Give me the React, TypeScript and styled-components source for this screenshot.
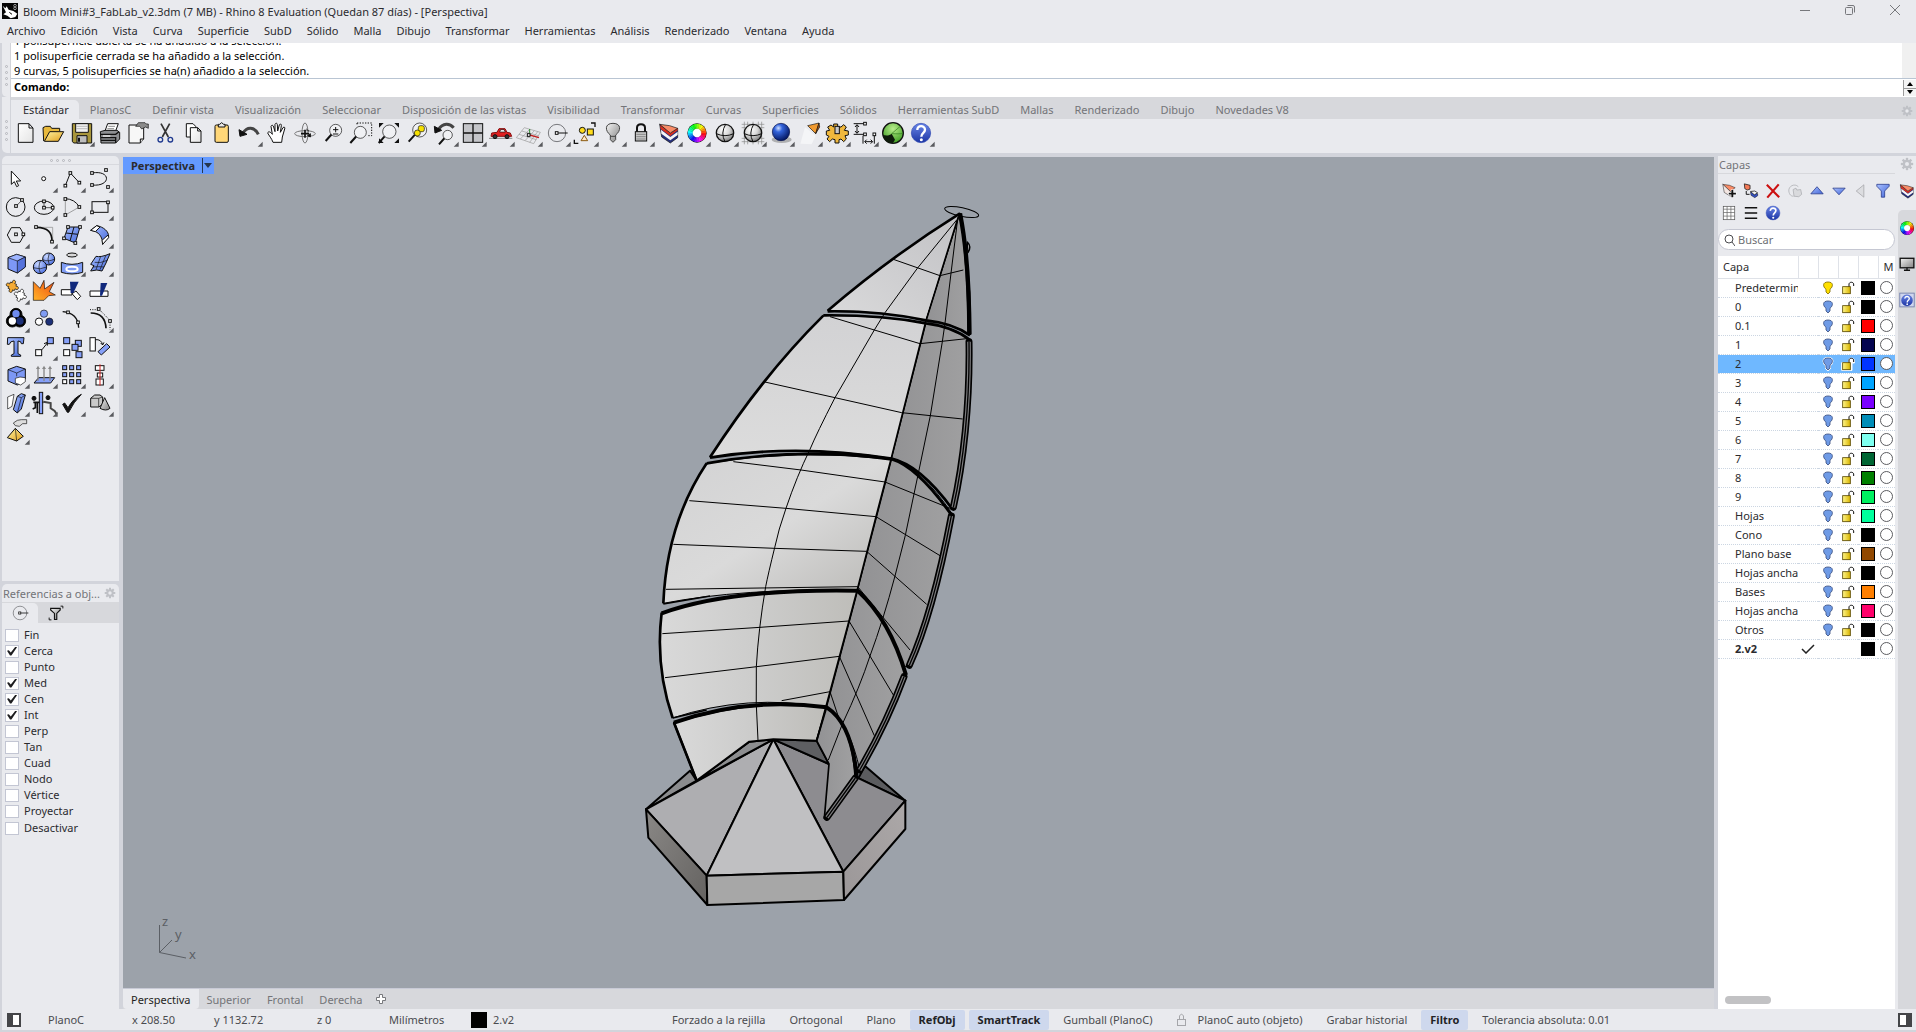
import React, { ReactNode } from 'react';
import styled, { createGlobalStyle } from 'styled-components';

const Global = createGlobalStyle`
  *, *::before, *::after { box-sizing: border-box; }
  html, body { margin: 0; padding: 0; }
  body, button, input, table {
    font-family: "Noto Sans", "Open Sans", sans-serif;
    font-size: 11px;
    color: #2b2b2e;
  }
  button { border: 0; padding: 0; background: none; cursor: default; }
  svg { flex: none; }
`;

const C = {
  panel: '#e9eaee',
  strip: '#d7d8dc',
  gap: '#d2d4db',
  view: '#9ca2aa',
  muted: '#737478',
};

/* ---------- layout ---------- */

const App_ = styled.div`
  display: flex;
  flex-direction: column;
  height: 100vh;
  overflow: hidden;
  background: ${C.gap};
  white-space: nowrap;
`;

const TitleBar = styled.header`
  display: flex;
  align-items: center;
  gap: 5px;
  height: 22px;
  padding: 0 14px 0 2px;
  background: ${C.panel};
`;

const Title = styled.h1`
  margin: 0;
  flex: 1;
  font-size: 11px;
  font-weight: 400;
`;

const WindowButtons = styled.div`
  display: flex;
  gap: 31px;
`;

const WindowButton = styled.button`
  display: flex;
  width: 14px;
  height: 14px;
`;

const MenuBar = styled.nav`
  display: flex;
  align-items: center;
  gap: 15px;
  height: 21px;
  padding: 0 7px 4px;
  background: ${C.panel};
`;

const MenuItem = styled.button`
  line-height: 16px;
`;

const CommandArea = styled.section`
  display: flex;
  height: 54px;
  padding-left: 2px;
`;

const Handle = styled.div`
  display: flex;
  flex-direction: column;
  align-items: center;
  justify-content: center;
  gap: 3px;
  width: 9px;
  padding-top: 10px;
  background: ${C.panel};
  border-right: 1px solid #d2d4da;
  border-radius: 0 0 0 5px;
`;

const Dot = styled.i`
  width: 3px;
  height: 3px;
  border: 1px solid #b4b6bb;
  border-radius: 50%;
`;

const CommandBody = styled.div`
  display: flex;
  flex-direction: column;
  flex: 1;
  background: #fff;
`;

const History = styled.div`
  display: flex;
  flex-direction: column;
  justify-content: flex-end;
  height: 36px;
  overflow: hidden;
  border-bottom: 1px solid #b9c5d3;
  background: linear-gradient(to left, #f0f0f0 14px, #fff 14px);
  color: #000;
`;

const HistoryLine = styled.p`
  margin: 0;
  padding-left: 3px;
  line-height: 15px;
  flex: none;
`;

const Prompt = styled.div`
  display: flex;
  align-items: center;
  flex: 1;
  padding-left: 3px;
  label {
    font-weight: 700;
    line-height: 14px;
    padding-bottom: 2px;
    color: #000;
  }
`;

const PromptInput = styled.input`
  flex: 1;
  height: 16px;
  border: 0;
  outline: 0;
  background: transparent;
`;

const Spinner = styled.div`
  display: flex;
  flex-direction: column;
  gap: 1px;
  width: 13px;
  height: 16px;
  background: #9b9b9b;
  padding-left: 1px;
`;

const SpinButton = styled.button`
  display: flex;
  flex: 1;
  align-items: center;
  justify-content: center;
  background: #f4f4f4;
`;

const ToolArea = styled.section`
  display: flex;
  height: 56px;
  padding: 0 0 0 2px;
`;

const ToolBody = styled.div`
  flex: 1;
  background: ${C.panel};
`;

const ToolTabs = styled.div`
  display: flex;
  align-items: flex-end;
  gap: 1px;
  height: 22px;
  padding-right: 1px;
  background: ${C.strip};
`;

const ToolTab = styled.button<{ $on?: boolean }>`
  height: 19px;
  padding: 0 10px;
  padding-left: ${p => (p.$on ? 12 : 10)}px;
  line-height: 18px;
  color: ${p => (p.$on ? '#2b2b2e' : C.muted)};
  background: ${p => (p.$on ? C.panel : 'transparent')};
  border-radius: 0 5px 0 0;
`;

const Spacer = styled.div`
  flex: 1;
`;

const ToolRow = styled.div`
  display: flex;
  height: 34px;
`;

const Cell = styled.button`
  display: flex;
  width: 28px;
  height: 28px;
`;

const Main = styled.main`
  display: flex;
  flex: 1;
  min-height: 0;
  padding-top: 3px;
`;

const Left = styled.aside`
  display: flex;
  flex-direction: column;
  gap: 3px;
  width: 121px;
  padding: 0 2px;
`;

const Tools = styled.section`
  height: 425px;
  background: ${C.panel};
  border-radius: 5px 5px 0 0;
`;

const Grip = styled.div`
  display: flex;
  justify-content: center;
  gap: 3px;
  height: 9px;
  padding-top: 3px;
  border-bottom: 1px solid #d8d9de;
`;

const ToolGrid = styled.div`
  display: grid;
  grid-template-columns: repeat(4, 28px);
`;

const Osnaps = styled.section`
  flex: 1;
  background: ${C.panel};
  border-radius: 5px 5px 0 0;
`;

const PanelTitle = styled.h2<{ $h: number }>`
  display: flex;
  align-items: center;
  justify-content: space-between;
  height: ${p => p.$h}px;
  margin: 0;
  padding: 0 3px 0 1px;
  font-size: 11px;
  font-weight: 400;
  color: ${C.muted};
  border-bottom: 1px solid ${C.strip};
`;

const OsnapTabs = styled.div`
  display: flex;
  height: 20px;
  background: ${C.strip};
`;

const OsnapTab = styled.button<{ $on?: boolean }>`
  display: flex;
  align-items: center;
  justify-content: center;
  width: 36px;
  background: ${p => (p.$on ? C.panel : 'transparent')};
  border-radius: 0 5px 0 0;
`;

const Checks = styled.div`
  display: flex;
  flex-direction: column;
  padding: 4px 3px;
`;

const Check = styled.label`
  display: flex;
  align-items: center;
  gap: 5px;
  height: 16px;
  line-height: 16px;
  &:last-child { height: 18px; }
`;

const Box = styled.input`
  appearance: none;
  display: flex;
  width: 14px;
  height: 13px;
  margin: 0;
  background: #fff;
  border: 1px solid #c3c6d3;
  &:checked::after {
    content: "";
    width: 10px;
    height: 9px;
    margin: 1px;
    background: #1e1e20;
    clip-path: polygon(0 48%, 18% 42%, 38% 68%, 85% 0, 100% 8%, 44% 100%, 30% 100%);
  }
`;

const Center = styled.section`
  display: flex;
  flex-direction: column;
  flex: 1;
  min-width: 0;
  padding: 1px 0 0 2px;
`;

const Viewport = styled.div`
  position: relative;
  flex: 1;
  min-height: 0;
  background: ${C.view};
`;

const Scene = styled.svg`
  position: absolute;
  inset: 0;
  width: 100%;
  height: 100%;
`;

const ViewLabel = styled.button`
  position: absolute;
  top: 0;
  left: 0;
  display: flex;
  align-items: center;
  gap: 7px;
  height: 17px;
  padding: 0 2px 0 8px;
  font-weight: 700;
  background: #649aff;
`;

const ViewArrow = styled.span`
  display: flex;
  align-items: center;
  height: 15px;
  padding-left: 1px;
  border-left: 1px solid #26374f;
`;

const Axes = styled.svg`
  position: absolute;
  left: 32px;
  bottom: 18px;
  width: 50px;
  height: 60px;
  font-size: 13px;
`;

const ViewTabs = styled.div`
  display: flex;
  align-items: center;
  height: 21px;
  background: ${C.strip};
  border-top: 1px solid #c8cad6;
`;

const ViewTab = styled.button<{ $on?: boolean }>`
  height: 20px;
  padding: 0 8px;
  color: ${p => (p.$on ? '#1f1f22' : C.muted)};
  background: ${p => (p.$on ? C.panel : 'transparent')};
  border-radius: 0 0 4px 4px;
`;

const AddTab = styled.button`
  display: flex;
  padding: 0 6px;
`;

const Right = styled.aside`
  display: flex;
  width: 202px;
  padding-left: 4px;
`;

const Layers = styled.section`
  display: flex;
  flex-direction: column;
  width: 180px;
  background: ${C.panel};
  padding-right: 3px;
`;

const LayerTools = styled.div`
  display: grid;
  grid-template-columns: repeat(8, 22px);
  grid-auto-rows: 22px;
  height: 55px;
  padding-top: 6px;
`;

const SmallCell = styled.button`
  display: flex;
  align-items: center;
  justify-content: center;
`;

const Search = styled.label`
  display: flex;
  align-items: center;
  gap: 3px;
  height: 21px;
  margin-bottom: 6px;
  padding: 0 5px;
  background: #fff;
  border: 1px solid #c5c7d2;
  border-radius: 11px;
`;

const SearchInput = styled.input`
  flex: 1;
  min-width: 0;
  padding: 0;
  border: 0;
  outline: 0;
  background: transparent;
  &::placeholder { color: #6e6f73; opacity: 1; }
`;

const LayerList = styled.div`
  display: flex;
  flex-direction: column;
  justify-content: space-between;
  flex: 1;
  background: #fff;
`;

const Table = styled.table`
  width: 100%;
  table-layout: fixed;
  border-collapse: collapse;
  th {
    height: 22px;
    padding: 0 0 0 5px;
    font-weight: 400;
    text-align: left;
    border-right: 1px solid #dfe2e8;
    border-bottom: 1px solid #dfe2e8;
    overflow: hidden;
  }
  th:last-child { border-right: 0; }
  td { padding: 0; overflow: hidden; }
`;

const Row = styled.tr<{ $on?: boolean; $bold?: boolean }>`
  height: 19px;
  background: ${p => (p.$on ? '#6fb8ff' : 'transparent')};
  font-weight: ${p => (p.$bold ? 700 : 400)};
  border-bottom: 1px dotted #ccd6e2;
`;

const Name = styled.div`
  padding-left: 17px;
  overflow: hidden;
  line-height: 18px;
`;

const Mid = styled.div`
  display: flex;
  align-items: center;
  justify-content: center;
  height: 18px;
`;

const Swatch = styled.button<{ $c: string }>`
  width: 14px;
  height: 14px;
  background: ${p => p.$c};
  border: 1px solid #000;
`;

const Ring = styled.button`
  flex: none;
  width: 13px;
  height: 13px;
  background: #fff;
  border: 1px solid #5c5d61;
  border-radius: 50%;
`;

const ScrollTrack = styled.div`
  padding: 5px 7px;
`;

const Thumb = styled.div`
  width: 46px;
  height: 8px;
  background: #c2c2c4;
  border-radius: 4px;
`;

const Side = styled.nav`
  display: flex;
  flex-direction: column;
  width: 18px;
  background: ${C.panel};
`;

const SideHead = styled.div`
  display: flex;
  flex-direction: column;
  align-items: center;
  gap: 10px;
  height: 54px;
  padding-top: 1px;
  overflow: hidden;
`;

const SideTabs = styled.div`
  display: flex;
  flex-direction: column;
  align-items: center;
  gap: 20px;
  flex: 1;
  padding-top: 10px;
  background: ${C.strip};
  border-radius: 5px 0 0 0;
`;

const Status = styled.footer`
  display: flex;
  align-items: center;
  height: 23px;
  margin: 0 0 0 2px;
  padding: 0 4px 0 5px;
  background: ${C.panel};
  border-bottom: 2px solid ${C.gap};
`;

const Field = styled.button<{ $w: number }>`
  display: flex;
  align-items: center;
  gap: 6px;
  width: ${p => p.$w}px;
  text-align: left;
  color: #4a4b4f;
`;

const Toggles = styled.div`
  display: flex;
  gap: 4px;
`;

const Toggle = styled.button<{ $on?: boolean }>`
  display: flex;
  align-items: center;
  gap: 10px;
  height: 20px;
  padding: 0 ${p => (p.$on ? 9 : 10)}px;
  color: ${p => (p.$on ? '#222326' : '#4a4b4f')};
  font-weight: ${p => (p.$on ? 700 : 400)};
  background: ${p => (p.$on ? '#ced8ed' : 'transparent')};
  border-radius: 2px;
`;

/* ---------- icon drawings, on an 84 unit cell ---------- */

const K = '#111';

const Defs = () => (
  <svg width="0" height="0" style={{ position: 'absolute' }} aria-hidden="true">
    <defs>
      <linearGradient id="paper" x1="0" y1="0" x2="1" y2="1"><stop offset="0" stopColor="#fff" /><stop offset="1" stopColor="#e4e4e4" /></linearGradient>
      <linearGradient id="gold" x1="0" y1="0" x2="1" y2="1"><stop offset="0" stopColor="#fff3a0" /><stop offset="1" stopColor="#e0a020" /></linearGradient>
      <linearGradient id="blue" x1="0" y1="0" x2="1" y2="1"><stop offset="0" stopColor="#a9c0ff" /><stop offset="1" stopColor="#4266d8" /></linearGradient>
      <linearGradient id="fire" x1="1" y1="0" x2="0" y2="1"><stop offset="0" stopColor="#f04a10" /><stop offset="1" stopColor="#ffb428" /></linearGradient>
      <linearGradient id="help" x1="0" y1="0" x2="0" y2="1"><stop offset="0" stopColor="#6a86e8" /><stop offset="1" stopColor="#1c35a4" /></linearGradient>
      <linearGradient id="grey" x1="0" y1="0" x2="1" y2="1"><stop offset="0" stopColor="#f4f4f4" /><stop offset="1" stopColor="#808080" /></linearGradient>
      <linearGradient id="yel" x1="0" y1="0" x2="1" y2="0"><stop offset="0" stopColor="#fff68a" /><stop offset="1" stopColor="#d9b400" /></linearGradient>
      <radialGradient id="ball" cx=".38" cy=".3" r=".75"><stop offset="0" stopColor="#fff" /><stop offset=".5" stopColor="#d8d8d8" /><stop offset="1" stopColor="#777" /></radialGradient>
      <radialGradient id="bball" cx=".35" cy=".28" r=".75"><stop offset="0" stopColor="#cfe0ff" /><stop offset=".3" stopColor="#3464dc" /><stop offset="1" stopColor="#03155e" /></radialGradient>
      <radialGradient id="sky" cx=".35" cy=".3" r=".75"><stop offset="0" stopColor="#c9d8ff" /><stop offset="1" stopColor="#4c6fe0" /></radialGradient>
      <radialGradient id="green" cx=".5" cy=".3" r=".7"><stop offset="0" stopColor="#b8ec8c" /><stop offset="1" stopColor="#3c9c20" /></radialGradient>
      <linearGradient id="leafA" x1="0" y1="0" x2="1" y2="1"><stop offset="0" stopColor="#d2d2d3" /><stop offset=".5" stopColor="#dadada" /><stop offset="1" stopColor="#b7b6b3" /></linearGradient>
      <linearGradient id="leafTop" x1="1" y1="0" x2="0" y2="1"><stop offset="0" stopColor="#c2c2c5" /><stop offset="1" stopColor="#dadadb" /></linearGradient>
      <linearGradient id="leafMid" x1="0" y1="0" x2="0" y2="1"><stop offset="0" stopColor="#d2d2d4" /><stop offset="1" stopColor="#dcdcdc" /></linearGradient>
      <linearGradient id="leafB" x1="0" y1="0" x2="1" y2="0"><stop offset="0" stopColor="#d9d9d9" /><stop offset=".5" stopColor="#cccccb" /><stop offset="1" stopColor="#bebdb9" /></linearGradient>
      <linearGradient id="dark" x1="0" y1="0" x2="1" y2="0"><stop offset="0" stopColor="#929294" /><stop offset="1" stopColor="#a0a0a1" /></linearGradient>
      <linearGradient id="baseL" x1="0" y1="0" x2="1" y2="1"><stop offset="0" stopColor="#8a8886" /><stop offset="1" stopColor="#646260" /></linearGradient>
      <linearGradient id="baseR" x1="0" y1="1" x2="1" y2="0"><stop offset="0" stopColor="#9b9798" /><stop offset="1" stopColor="#aca8a8" /></linearGradient>
    </defs>
  </svg>
);

const Draw = ({ s = 28, tri, children }: { s?: number; tri?: boolean; children?: ReactNode }) => (
  <svg width={s} height={s} viewBox="0 0 84 84" fill="none" stroke={K} strokeWidth="3" aria-hidden="true">
    {children}
    {tri && <path d="M83 68V83H68Z" fill="#5a5b5f" stroke="none" />}
  </svg>
);

const P = ({ pts }: { pts: number[][] }) => (
  <g fill="#fff" strokeWidth="3">
    {pts.map(([x, y], i) => <rect key={i} x={x - 4} y={y - 4} width="8" height="8" />)}
  </g>
);

const Wheel = () => (
  <g strokeWidth="15">
    <circle cx="42" cy="42" r="29" stroke="none" fill={K} />
    {Array.from({ length: 24 }, (_, i) => {
      const a = ((i * 15 - 1) * Math.PI) / 180;
      const b = ((i * 15 + 16) * Math.PI) / 180;
      const d = `M${42 + 20 * Math.cos(a)} ${42 + 20 * Math.sin(a)}A20 20 0 0 1 ${42 + 20 * Math.cos(b)} ${42 + 20 * Math.sin(b)}`;
      return <path key={i} d={d} stroke={`hsl(${(360 - i * 15) % 360} 95% 52%)`} />;
    })}
    <circle cx="42" cy="42" r="13" stroke="none" fill="#fff" />
  </g>
);

const Help = () => (
  <>
    <circle cx="42" cy="42" r="29" fill="url(#help)" stroke="#2c46b0" strokeWidth="2" />
    <path d="M31 33C30 18 54 18 54 32C54 42 43 41 43 53" stroke="#fff" strokeWidth="7" />
    <circle cx="43" cy="62" r="4.500" fill="#fff" stroke="none" />
  </>
);

const LayerStack = () => (
  <>
    <path d="M14 16L20 54L46 72L68 56V28L46 44Z" fill="#26307c" strokeWidth="2" />
    <path d="M18 32L46 54L68 38V48L46 64L19 44Z" fill="#f6f6f6" stroke="none" />
    <path d="M15 18L46 43L68 28V34L46 51L17 30Z" fill="#d8301e" stroke="none" />
    <path d="M14 16L44 20L68 28L46 42Z" fill="#f88c68" strokeWidth="2" />
  </>
);

const Lens = ({ x = 48, y = 34, r = 18 }: { x?: number; y?: number; r?: number }) => (
  <>
    <path d={`M${x - r * 0.7} ${y + r * 0.7}L${x - r - 12} ${y + r + 14}`} strokeWidth="6" />
    <circle cx={x} cy={y} r={r} fill="#fff" fillOpacity=".35" strokeWidth="2" />
  </>
);

const Bulb = () => (
  <path d="M42 13C16 13 18 36 34 48V62L42 70L50 62V48C66 36 68 13 42 13ZM34 52H50" fill="url(#grey)" stroke="#444" />
);

const Gear = () => (
  <g stroke="#bfc1c6">
    {[0, 45, 90, 135].map(a => <path key={a} d="M42 5V79" strokeWidth="14" transform={`rotate(${a} 42 42)`} />)}
    <circle cx="42" cy="42" r="19" fill={C.panel} strokeWidth="14" />
  </g>
);

const Puzzle = ({ fill }: { fill: string }) => (
  <path d="M-10 -10H-4C-9 -22 9 -22 4 -10H10V-4C22 -9 22 9 10 4V10H4C9 22 -9 22 -4 10H-10V4C-22 9 -22 -9 -10 -4Z" fill={fill} strokeWidth="2" />
);

const gearPath = 'M30 13H42V22H52L60 15L68 22L62 32L74 34V46L64 48L68 58L60 66L52 58L46 60V70H34V60L26 58L18 66L10 58L16 50L8 46V34L18 32L12 22L22 16L30 22Z';

const T = {
  new: <path d="M22 14H54L66 27V70H22ZM54 14V27H66" fill="url(#paper)" />,
  open: <><path d="M14 66L12 26L20 22H34L38 28H62V36" fill="#e8b93c" /><path d="M16 67L32 38H74L58 67Z" fill="url(#gold)" /></>,
  save: <><path d="M16 14H74V72H20L16 67Z" fill="#a8963c" /><path d="M26 14H64V40H26Z" fill="#f2f2f2" /><path d="M28 22H62M28 29H62" stroke="#a0a0a0" strokeWidth="2" /><path d="M30 50H60V72H30Z" fill="#bdbdbd" /><path d="M36 56V68" strokeWidth="6" /></>,
  print: <><path d="M30 36L38 14H70L62 36Z" fill="#fff" /><path d="M40 22H60M37 29H57" strokeWidth="2" stroke="#555" /><path d="M16 38L30 34H66L74 40V60L62 72H18Z" fill="#8d8f92" /><path d="M18 46H62L72 38M18 56H62V72M18 64H62" strokeWidth="4" /><path d="M24 51H46" stroke="#eee" strokeWidth="4" /></>,
  props: <><path d="M18 18H62V60L52 72H18Z" fill="#f7f7f7" /><path d="M62 60H52V72" fill="#ddd" /><path d="M38 22L46 11H66L70 15H76V28L68 24L56 30L50 22Z" fill="#8b8b8b" strokeWidth="2" /></>,
  cut: <><path d="M30 14L52 54M56 14L34 54" stroke="#333" strokeWidth="5" /><circle cx="28" cy="62" r="7" stroke="#203a90" strokeWidth="4" /><circle cx="58" cy="62" r="7" stroke="#203a90" strokeWidth="4" /></>,
  copy: <><path d="M22 14H42L50 22V54H22Z" fill="#fff" /><path d="M34 26H56L66 36V70H34ZM56 26V36H66" fill="url(#paper)" /></>,
  paste: <><rect x="24" y="18" width="40" height="52" rx="4" fill="#ffd778" /><path d="M34 24V16H38L44 11L50 16H54V24Z" fill="#e8e8e8" /></>,
  undo: <><path d="M24 42C36 22 58 22 70 46" strokeWidth="9" stroke="#444" /><path d="M12 32L15 52L36 46Z" fill={K} /></>,
  hand: <path d="M30 70C26 58 18 50 14 42C16 36 22 38 28 46L24 22C26 17 30 18 32 24L36 38V16C38 11 43 12 43 17L44 36L49 18C51 13 56 15 55 20L52 40L60 26C64 22 67 26 65 30L58 54L56 70Z" fill="#fff" />,
  orbit: <><ellipse cx="42" cy="44" rx="31" ry="9" stroke="#777" /><ellipse cx="42" cy="42" rx="9" ry="30" stroke="#777" /><path d="M30 44H54M42 32V56" strokeWidth="5" /><path d="M46 30L54 37M50 50L58 44L58 54Z" fill={K} /></>,
  zoom: <><Lens x={50} y={34} r={18} /><path d="M42 32H58M50 24V40M42 45H58" strokeWidth="3" /></>,
  zoomWin: <><path d="M30 12H74V50H64M30 12V20" strokeDasharray="4 4" /><Lens x={40} y={40} r={18} /></>,
  zoomExt: <><Lens x={43} y={38} r={20} /><path d="M12 12H26L12 26ZM72 12H58L72 26ZM72 72H58L72 58ZM12 72H26L12 58Z" fill={K} stroke="none" /></>,
  zoomSel: <><Lens x={50} y={33} r={21} /><rect x="46" y="20" width="18" height="18" rx="6" fill="#f6e100" strokeWidth="2" /><circle cx="43" cy="42" r="9" fill="#f6e100" strokeWidth="2" /></>,
  undoView: <><path d="M22 32C36 10 56 12 68 26" strokeWidth="9" stroke="#444" /><path d="M10 22L12 42L32 34Z" fill={K} /><Lens x={50} y={48} r={14} /></>,
  views: <><rect x="13" y="14" width="58" height="56" fill="#c4c5c9" /><path d="M42 14V70M13 42H71" strokeWidth="4" /></>,
  car: <><path d="M6 58H76" stroke="#888" /><path d="M14 42L30 40L36 29H54L60 40L70 42L74 52H12Z" fill="#e02020" stroke="#8a1010" /><path d="M38 39L41 32H51L55 39Z" fill="#fff" strokeWidth="2" /><circle cx="24" cy="53" r="6" fill="#333" /><circle cx="60" cy="53" r="6" fill="#333" /></>,
  cplane: <><path d="M4 56L28 26L76 40L56 74ZM12 46L64 62M20 36L70 50M16 60L44 31M30 65L58 35M44 70L68 38" stroke="#999" strokeWidth="2" /><path d="M44 48L72 56" stroke="#c02020" strokeWidth="4" /><path d="M44 48V30" stroke="#2a8a2a" /><P pts={[[41, 48]]} /></>,
  osnap: <><circle cx="42" cy="42" r="26" stroke="#77787c" /><path d="M44 42H74" /><P pts={[[41, 42]]} /></>,
  select: <><path d="M60 12H72V24M10 62V73H22" strokeWidth="4" /><circle cx="34" cy="34" r="9" fill="#ffdc1c" /><rect x="49" y="30" width="18" height="18" fill="#ffdc1c" /><path d="M40 49L50 65H30Z" fill="#ffe9c8" stroke="#8a5a10" /></>,
  bulb: <Bulb />,
  lock: <><path d="M30 40V26C30 12 54 12 54 26V40" strokeWidth="6" /><rect x="25" y="38" width="34" height="28" fill="#c8c8c8" /><path d="M28 46H56M28 53H56M28 60H56" stroke="#888" /></>,
  layers: <LayerStack />,
  color: <Wheel />,
  sphere: <><circle cx="42" cy="42" r="26" fill="url(#ball)" strokeWidth="4" /><path d="M16 44Q42 56 68 44M44 16Q28 42 42 68" /></>,
  sphereGrid: <><path d="M8 16H76M8 26H76M8 58H76M8 68H76M16 8V76M26 8V76M42 8V76M58 8V76M68 8V76" stroke="#888" strokeWidth="2" /><circle cx="42" cy="42" r="26" fill="url(#ball)" strokeWidth="4" /><path d="M16 44Q42 56 68 44M44 16Q28 42 42 68" /></>,
  render: <><ellipse cx="44" cy="62" rx="30" ry="10" fill="#888" stroke="none" opacity=".6" /><circle cx="42" cy="39" r="26" fill="url(#bball)" stroke="#06104a" strokeWidth="2" /></>,
  spot: <><path d="M16 74L30 24L62 50L50 76Z" fill="#fff" stroke="none" opacity=".5" /><path d="M38 20L72 12L62 44Z" fill="#f09a30" strokeWidth="2" /><path d="M72 12L74 24L62 44Z" fill="#b05a10" strokeWidth="2" /></>,
  gear: <><path d={gearPath} fill="#f0b83c" transform="translate(2 2)" /><rect x="36" y="22" width="13" height="22" fill="#c9c9c9" /></>,
  dims: <><path d="M8 14H40M8 46H40M18 18V42M12 24L18 17L24 24M12 36L18 43L24 36M36 50V74M70 50V74M42 68H64M47 62L41 68L47 74M59 62L65 68L59 74" /><P pts={[[42, 14], [42, 46], [70, 46]]} /></>,
  earth: <><circle cx="42" cy="42" r="31" fill="url(#green)" strokeWidth="4" /><path d="M12 48C22 50 32 50 38 44L48 62L42 72C26 74 14 64 12 48Z" fill="#0d1a0a" stroke="none" /><path d="M38 44L66 20M38 44C54 44 62 46 72 42" stroke="#2f7a1c" strokeWidth="2" /></>,
  help: <Help />,
};

const cubeShape = 'M18 26L44 16L70 24V54L46 72L18 60Z';

const G = {
  pointer: <path d="M28 18V58L37 50L44 65L50 62L43 48H56Z" fill="#fff" />,
  point: <circle cx="41" cy="41" r="6" fill="#fff" />,
  polyline: <><path d="M22 62L37 24L64 53" /><P pts={[[22, 62], [37, 24], [64, 53]]} /></>,
  curve: <><path d="M18 24C76 14 76 66 18 60" /><P pts={[[18, 24], [60, 15], [18, 60], [66, 66]]} /></>,
  circle: <><circle cx="41" cy="42" r="28" /><path d="M42 40L60 21" strokeWidth="2" /><P pts={[[42, 39], [60, 21]]} /></>,
  ellipse: <><ellipse cx="42" cy="44" rx="29" ry="20" /><path d="M42 25V44H68" strokeWidth="2" /><P pts={[[42, 25], [42, 44], [68, 44]]} /></>,
  arc: <><path d="M22 17Q50 18 64 42" /><path d="M64 42L22 66V17" stroke="#777" strokeWidth="2" /><P pts={[[22, 18], [64, 42], [22, 66]]} /></>,
  rect: <><rect x="18" y="26" width="48" height="32" /><P pts={[[66, 28], [18, 58]]} /></>,
  polygon: <><path d="M16 42L28 20H54L66 42L54 64H28Z" /><P pts={[[42, 40], [64, 40]]} /></>,
  fillet: <><path d="M20 19H68V60" stroke="#888" strokeWidth="2" /><path d="M20 19C54 20 66 34 66 62" strokeWidth="5" /><P pts={[[18, 18], [66, 62]]} /></>,
  surf: <><path d="M30 18L66 18L52 66L18 52Z" fill="url(#blue)" /><path d="M48 18L36 60M24 36L60 40" /><P pts={[[30, 18], [66, 18], [52, 66], [18, 52]]} /></>,
  sweep: <><path d="M14 28L32 14C54 18 68 32 68 46L50 70C50 48 38 30 14 28Z" fill="url(#blue)" /><path d="M14 28L32 14L42 18L28 32ZM48 58L66 42L68 50L50 70Z" fill="#fff" /></>,
  box: <><path d={cubeShape} fill="#7d98f6" /><path d="M18 26L44 16L70 24L46 36Z" fill="#9db4ff" strokeWidth="2" /><path d="M70 24V54L46 72V36Z" fill="#5573dc" strokeWidth="2" /></>,
  spheres: <><circle cx="56" cy="30" r="18" fill="url(#sky)" /><circle cx="30" cy="54" r="20" fill="url(#sky)" /><path d="M10 56Q30 64 50 54M32 34Q22 54 32 74M38 32Q56 40 74 30M58 12Q50 30 58 48" strokeWidth="2" /></>,
  extrude: <><ellipse cx="42" cy="18" rx="16" ry="6" fill="#d8d8d8" /><path d="M10 40Q42 52 74 40V70Q42 80 10 70Z" fill="#7f9cf4" /><ellipse cx="42" cy="60" rx="17" ry="7" stroke="#fff" strokeWidth="6" /></>,
  mesh: <><path d="M14 46L30 22Q44 26 72 14L60 42L48 66Q34 60 14 66L24 50Z" fill="url(#blue)" /><path d="M26 40Q42 44 64 34M20 54Q38 52 54 54M44 22L30 62M60 18L42 62" strokeWidth="2" /></>,
  join: <><g transform="translate(31 28) rotate(20)"><Puzzle fill="#f5ab34" /></g><g transform="translate(55 55) rotate(20)"><Puzzle fill="#fff" /></g></>,
  explode: <path d="M10 14L30 34L42 10L44 36L72 16L58 44L76 54L56 56L42 70H10Z" fill="url(#fire)" strokeWidth="2" />,
  trim: <><path d="M10 38H42V54H10Z" fill="#fff" /><path d="M42 50L54 42L68 58L58 68Z" fill="#fff" /><path d="M36 14H62L46 48H38Z" fill="#10287c" stroke="none" /></>,
  split: <><path d="M12 42H66V58H12Z" fill="#fff" /><path d="M44 18H64L48 56H42Z" fill="#10287c" stroke="none" /></>,
  group: <><circle cx="42" cy="28" r="18" fill="#000" /><circle cx="31" cy="48" r="18" fill="#000" /><circle cx="53" cy="48" r="18" fill="#000" /><circle cx="42" cy="26" r="11" fill="#6f8cf0" stroke="none" /><circle cx="31" cy="48" r="11" fill="#fff" stroke="none" /><circle cx="54" cy="48" r="11" fill="#1c3078" stroke="none" /></>,
  ungroup: <><circle cx="42" cy="26" r="11" fill="#7f9cf4" strokeWidth="2" /><circle cx="27" cy="50" r="11" fill="#fff" /><circle cx="58" cy="50" r="11" fill="#1c3078" strokeWidth="2" /></>,
  arcPts: <><path d="M14 20Q60 24 62 68" strokeWidth="4" /><P pts={[[30, 22], [60, 52]]} /></>,
  blend: <><path d="M14 24Q58 24 60 70" strokeWidth="5" /><path d="M12 14H36M44 18L68 42M72 52V74" strokeDasharray="3 4" /><P pts={[[38, 12], [72, 48]]} /></>,
  text: <path d="M17 14H66L64 32H58Q58 24 48 24V62L56 66V70H28V66L36 62V24Q24 24 22 34H16Z" fill="url(#blue)" />,
  move: <><path d="M36 50L52 30M52 38V28L42 32" /><rect x="52" y="14" width="18" height="18" fill="#86a0f8" /><rect x="17" y="50" width="18" height="18" fill="#fff" /></>,
  array: <><rect x="17" y="14" width="18" height="18" fill="#86a0f8" /><rect x="52" y="22" width="18" height="18" fill="#86a0f8" /><rect x="42" y="34" width="18" height="18" fill="#86a0f8" /><rect x="17" y="50" width="18" height="18" fill="#fff" /><rect x="54" y="56" width="18" height="18" fill="#86a0f8" /></>,
  orient: <><rect x="12" y="14" width="16" height="40" fill="#fff" /><path d="M28 20Q46 18 50 36L44 30M50 36L54 28" /><path d="M36 56L62 32L72 42L46 66Z" fill="#86a0f8" /></>,
  boxCut: <><path d={cubeShape} fill="#7d98f4" /><path d="M18 26L44 36L70 24M44 36V46" strokeWidth="2" /><path d="M40 52L54 48L70 50V62L56 72L40 66Z" fill="#fff" strokeWidth="2" /></>,
  project: <><path d="M26 50H74L62 66H12Z" fill="#86a0f8" /><path d="M24 60V20M42 60V20M60 60V20" stroke="#888" strokeWidth="4" /><path d="M18 24L24 14L30 24ZM36 24L42 14L48 24ZM54 24L60 14L66 24Z" fill="#888" stroke="none" /></>,
  grid9: <g fill="#86a0f8">{[14, 35, 56].map(y => [14, 35, 56].map(x => <rect key={`${x}-${y}`} x={x} y={y} width="12" height="12" fill={x === 14 && y === 56 ? '#fff' : undefined} />))}</g>,
  align: <><rect x="28" y="14" width="26" height="14" fill="#fff" /><rect x="34" y="36" width="16" height="12" fill="#fff" /><rect x="30" y="54" width="22" height="18" fill="#fff" /><path d="M42 10V74" stroke="#d02020" /></>,
  offset: <><path d="M17 24L36 16L30 52L17 60Z" fill="#fff" strokeWidth="2" /><path d="M34 62L46 22L58 14L70 18L58 60L46 72Z" fill="url(#blue)" /><path d="M46 22L58 26L70 18M58 26L46 72" strokeWidth="2" /></>,
  flow: <><circle cx="12" cy="28" r="6" fill={K} /><circle cx="54" cy="26" r="6" fill={K} /><path d="M10 40H40M16 40V56L8 60M22 42V72" strokeWidth="5" /><path d="M40 38L62 42V58L74 66L80 76" strokeWidth="6" stroke="#444" /><rect x="28" y="10" width="10" height="64" fill="#86a0f8" /></>,
  check: <path d="M14 46L20 42L30 56Q46 28 70 16Q46 40 32 70H28Z" fill={K} />,
  solids: <><path d="M14 28L26 18H42L50 24V46L38 54H14Z" fill="#c9c9c9" /><path d="M14 28H38L50 24M38 28V54" strokeWidth="2" /><path d="M56 26L72 58Q60 68 42 58Z" fill="url(#grey)" /></>,
  pyramid: <><path d="M34 18L46 10L58 8H74V20H62L52 28L40 26Z" fill="#ddd" strokeWidth="2" /><path d="M40 34L64 58L44 72L16 62Z" fill="url(#gold)" /><path d="M40 34L44 72" strokeWidth="2" /></>,
};

const toolbar = Object.entries(T) as [string, ReactNode][];
const tools = Object.entries(G) as [string, ReactNode][];
const plainTools = ['pointer', 'explode', 'trim', 'split', 'ungroup', 'arcPts', 'text', 'array', 'orient'];

const layerIcons: [string, ReactNode][] = [
  ['Nueva capa', <><path d="M16 14L44 18L68 28L48 44Z" fill="#f88c68" strokeWidth="2" /><path d="M16 14L48 44V64L22 48Z" fill="#f3e6e2" strokeWidth="2" /><path d="M56 36V70M39 53H73" stroke="#fff" strokeWidth="13" /><path d="M56 38V68M41 53H71" strokeWidth="8" /></>],
  ['Nueva subcapa', <><path d="M14 12L38 18V34L26 38L16 32Z" fill="#f47a58" /><path d="M40 46L58 48L70 54V62L58 70L42 60Z" fill="#3450c0" strokeWidth="2" /><path d="M40 44L58 42L70 50L56 58Z" fill="#f4f4f4" /><path d="M22 42V56H36" strokeWidth="4" /></>],
  ['Eliminar', <path d="M16 16L68 68M66 14L18 70" stroke="#cc1010" strokeWidth="9" />],
  ['Duplicar', <g stroke="#a8a9ad"><path d="M56 24C40 8 14 22 16 42C18 58 26 64 36 64" /><path d="M34 36L46 30L50 38L66 36L70 56L58 66L38 64Z" fill="#d9dadd" /></g>],
  ['Subir', <path d="M42 24L68 54H16Z" fill="url(#blue)" stroke="#1c2f80" />],
  ['Bajar', <path d="M42 58L68 30H16Z" fill="url(#blue)" stroke="#1c2f80" />],
  ['Nivel superior', <path d="M22 42L54 16V68Z" fill="#dcdde0" stroke="#a0a1a5" />],
  ['Filtro', <path d="M16 14H68V22L49 42V68H35V42L16 22Z" fill="url(#blue)" stroke="#1c2f80" />],
  ['Columnas', <><rect x="18" y="14" width="48" height="56" fill="#fff" stroke="#555" /><path d="M18 26H66M18 40H66M18 55H66M34 14V70M50 14V70" stroke="#666" strokeWidth="3" /></>],
  ['Menú', <path d="M16 20H68M16 42H68M16 64H68" strokeWidth="7" />],
  ['Ayuda', <Help />],
];

const layers: [string, string][] = [
  ['Predeterminado', '#000'], ['0', '#000'], ['0.1', '#ff0000'], ['1', '#050550'], ['2', '#0034ff'], ['3', '#00a4ff'],
  ['4', '#7a00ff'], ['5', '#008db8'], ['6', '#7dfff0'], ['7', '#006634'], ['8', '#008000'], ['9', '#00f060'],
  ['Hojas', '#00ff9c'], ['Cono', '#000'], ['Plano base', '#914800'], ['Hojas anchas', '#000'], ['Bases', '#ff7f00'],
  ['Hojas anchas', '#ff006a'], ['Otros', '#000'], ['2.v2', '#000'],
];

const OpenLock = ({ halo }: { halo?: boolean }) => (
  <Draw s={14}>
    {halo && <path d="M4 34H46V16Q62 -4 80 16V36H66V80H4Z" fill="#fff" stroke="#fff" strokeWidth="6" />}
    <path d="M48 36V18C50 4 74 4 76 18V30" strokeWidth="6" />
    <rect x="10" y="34" width="46" height="42" fill="url(#yel)" stroke="#5a4800" strokeWidth="5" />
  </Draw>
);

const LayerBulb = ({ on, halo }: { on?: boolean; halo?: boolean }) => (
  <Draw s={14}>
    {halo && <path d="M42 6C8 6 10 34 30 50V66L42 78L54 66V50C74 34 76 6 42 6Z" fill="#fff" stroke="#fff" strokeWidth="12" />}
    <path d="M42 6C8 6 10 34 30 50V66L42 78L54 66V50C74 34 76 6 42 6Z" fill={on ? '#ffe000' : '#6f9be6'} stroke={on ? '#806a00' : '#3c4f80'} strokeWidth="5" />
  </Draw>
);

/* ---------- the 3D model ---------- */

const rims = 'M1017 455C1020 640 1000 820 970 952M964 978C937 1120 900 1290 838 1426M822 1460Q770 1600 689 1740M676 1764L591 1882';

const Model = () => (
  <Scene viewBox="0 0 1591 831" fill="none" stroke="#000" strokeLinejoin="round" role="img" aria-label="Vista en perspectiva">
    <g transform="translate(507 33) scale(.33333)">
      <g strokeWidth="6">
        <path d="M48 1858L180 1742L200 1772Z" fill="#8b8c8e" />
        <path d="M705 1728L826 1832L685 1765Z" fill="#5b5c5f" />
      </g>
      <g strokeWidth="4">
        <path d="M990 70C1012 180 1022 290 1022 433L1008 430Z" fill="#555" />
        <path d="M1012 156Q1026 170 1014 188Z" fill="#d8d8d8" />
      </g>
      <g strokeWidth="3">
        <path d="M990 70Q785 200 593 362Q750 362 888 392Z" fill="url(#leafTop)" />
        <path d="M985 85L888 392Q970 400 1014 432Q1014 240 990 70Z" fill="url(#dark)" />
        <path d="M580 377Q400 555 240 802Q500 760 785 805L888 400Q750 374 580 377Z" fill="url(#leafMid)" />
        <path d="M888 400Q970 410 1020 450C1022 640 1002 820 965 955Q870 825 785 805Z" fill="url(#dark)" />
        <path d="M230 820Q110 1000 100 1240Q330 1195 683 1200L785 808Q500 775 230 820Z" fill="url(#leafA)" />
        <path d="M785 808Q870 830 967 972C940 1120 900 1290 830 1430L820 1430Q780 1300 683 1200Z" fill="url(#dark)" />
        <path d="M95 1268Q75 1430 128 1584Q350 1510 590 1552L683 1203Q300 1195 95 1268Z" fill="url(#leafB)" />
        <path d="M683 1203Q780 1290 828 1455Q770 1620 690 1743Q660 1600 590 1552Z" fill="url(#dark)" />
      </g>
      <g strokeWidth="6">
        <path d="M430 1648L597 1722L826 1832L640 2045Z" fill="#8d8c90" />
        <path d="M48 1858L430 1648L230 2057Z" fill="#aeaeb1" />
        <path d="M430 1648L640 2045L230 2057Z" fill="#c0c0c2" />
        <path d="M48 1858L230 2057L232 2145L55 1943Z" fill="url(#baseL)" />
        <path d="M230 2057L640 2045L642 2130L232 2145Z" fill="#a7a7a7" />
        <path d="M640 2045L826 1832V1917L642 2130Z" fill="url(#baseR)" />
        <path d="M200 1772L358 1655L430 1648Z" fill="#8d8e90" />
        <path d="M430 1648L560 1652L597 1722Z" fill="#5e5f62" />
        <path d="M132 1598L200 1772L358 1655L430 1648L560 1652L590 1552Q380 1520 132 1598Z" fill="url(#leafB)" />
        <path d="M590 1552Q665 1600 675 1758L590 1888L583 1885L597 1722L560 1652Z" fill="url(#dark)" strokeWidth="5" />
      </g>
      <g strokeWidth="3">
        <path d="M980 90L862 235L765 368L733 420L615 623Q560 730 540 778Q500 860 468 955Q445 1020 434 1073Q415 1150 407 1190Q385 1320 379 1430Q376 1540 384 1650" />
        <path d="M982 95L963 250L945 400L937 455L901 677L865 850L826 1036L795 1158Q760 1290 720 1398Q690 1490 638 1600L595 1710" />
        <path d="M790 208L930 257L1000 240M600 380L733 420L870 461L1010 446M400 575L615 623L815 668L998 687M310 815L513 840L765 876L960 955M178 932L468 955L738 980L935 1100M130 1063L434 1075L710 1084L890 1243M108 1198L683 1190L840 1380" />
        <path d="M97 1331L390 1312L657 1293L790 1515M105 1463L380 1430L628 1399L733 1637M455 1532L600 1505L625 1580" />
      </g>
      <path d="M985 80L888 392L785 800L738 980L683 1195L657 1293L600 1505L560 1652" strokeWidth="5" />
      <g strokeWidth="8">
        <path d="M990 70Q785 198 593 362M580 377Q400 555 240 802M230 820Q110 1000 100 1240M95 1268Q75 1430 128 1584M132 1598L200 1772" />
        <path d="M593 364Q750 362 888 391Q970 400 1020 436M580 376Q750 374 888 400Q970 410 1020 450M240 803Q500 760 785 806Q870 825 967 957M230 820Q500 770 785 808Q860 830 962 972" />
        <path d="M95 1270Q300 1195 683 1202Q780 1290 828 1455M132 1598Q350 1520 590 1552Q665 1600 680 1758" strokeWidth="12" />
        <path d="M100 1242L240 1218M128 1584L230 1560" strokeWidth="5" />
        <path d="M990 70C1012 180 1018 290 1018 433" strokeWidth="13" />
      </g>
      <path d={rims} strokeWidth="21" strokeLinecap="round" />
      <path d={rims} strokeWidth="11" stroke="#7c7c7e" />
      <path d={rims} strokeWidth="4" />
      <ellipse cx="995" cy="66" rx="52" ry="13" strokeWidth="3" transform="rotate(12 995 66)" />
    </g>
  </Scene>
);

/* ---------- content ---------- */

const menus = ['Archivo', 'Edición', 'Vista', 'Curva', 'Superficie', 'SubD', 'Sólido', 'Malla', 'Dibujo', 'Transformar', 'Herramientas', 'Análisis', 'Renderizado', 'Ventana', 'Ayuda'];
const tabs = ['Estándar', 'PlanosC', 'Definir vista', 'Visualización', 'Seleccionar', 'Disposición de las vistas', 'Visibilidad', 'Transformar', 'Curvas', 'Superficies', 'Sólidos', 'Herramientas SubD', 'Mallas', 'Renderizado', 'Dibujo', 'Novedades V8'];
const osnaps = ['Fin', 'Cerca', 'Punto', 'Med', 'Cen', 'Int', 'Perp', 'Tan', 'Cuad', 'Nodo', 'Vértice', 'Proyectar', 'Desactivar'];
const osnapsOn = ['Cerca', 'Med', 'Cen', 'Int'];
const toggles = ['Forzado a la rejilla', 'Ortogonal', 'Plano', 'RefObj', 'SmartTrack', 'Gumball (PlanoC)', 'PlanoC auto (objeto)', 'Grabar historial', 'Filtro', 'Tolerancia absoluta: 0.01'];
const togglesOn = ['RefObj', 'SmartTrack', 'Filtro'];

const Dots = () => <><Dot /><Dot /><Dot /><Dot /></>;

export default function App() {
  return (
    <App_>
      <Global />
      <Defs />
      <TitleBar>
        <svg width="16" height="16" viewBox="0 0 48 48" aria-hidden="true">
          <rect width="48" height="48" fill="#050505" />
          <path d="M2 8L10 16L14 10L20 20L34 24L46 32L40 42L26 46L16 38L4 34L12 28Z" fill="#fff" />
          <path d="M22 28L30 34" stroke="#000" strokeWidth="3" />
          <circle cx="39" cy="8" r="4" fill="none" stroke="#ccc" strokeWidth="2" /><circle cx="39" cy="16" r="4" fill="none" stroke="#ccc" strokeWidth="2" />
        </svg>
        <Title>Bloom Mini#3_FabLab_v2.3dm (7 MB) - Rhino 8 Evaluation (Quedan 87 días) - [Perspectiva]</Title>
        <WindowButtons>
          <WindowButton aria-label="Minimizar"><svg width="14" height="14" stroke="#77787c"><path d="M2 6.500H12" /></svg></WindowButton>
          <WindowButton aria-label="Restaurar"><svg width="14" height="14" fill="none" stroke="#77787c"><rect x="2.500" y="3.500" width="7" height="7" rx="1" /><path d="M4.500 1.500H10Q11.500 1.500 11.500 3V8.500" /></svg></WindowButton>
          <WindowButton aria-label="Cerrar"><svg width="14" height="14" stroke="#77787c"><path d="M2 1L12 11M12 1L2 11" /></svg></WindowButton>
        </WindowButtons>
      </TitleBar>
      <MenuBar>{menus.map(m => <MenuItem key={m}>{m}</MenuItem>)}</MenuBar>

      <CommandArea>
        <Handle><Dots /></Handle>
        <CommandBody>
          <History>
            <HistoryLine>1 polisuperficie abierta se ha añadido a la selección.</HistoryLine>
            <HistoryLine>1 polisuperficie cerrada se ha añadido a la selección.</HistoryLine>
            <HistoryLine>9 curvas, 5 polisuperficies se ha(n) añadido a la selección.</HistoryLine>
          </History>
          <Prompt>
            <label htmlFor="cmd">Comando:</label>
            <PromptInput id="cmd" />
            <Spinner>
              <SpinButton aria-label="Anterior"><svg width="6" height="4"><path d="M0 4L3 0L6 4Z" /></svg></SpinButton>
              <SpinButton aria-label="Siguiente"><svg width="6" height="4"><path d="M0 0L3 4L6 0Z" /></svg></SpinButton>
            </Spinner>
          </Prompt>
        </CommandBody>
      </CommandArea>

      <ToolArea>
        <Handle><Dots /></Handle>
        <ToolBody>
          <ToolTabs>
            {tabs.map((t, i) => <ToolTab key={t} $on={i === 0}>{t}</ToolTab>)}
            <Spacer />
            <WindowButton aria-label="Opciones de barra"><Draw s={12}><Gear /></Draw></WindowButton>
          </ToolTabs>
          <ToolRow>
            {toolbar.map(([n, d], i) => <Cell key={n} aria-label={n}><Draw tri={i === 2 || i === 8 || i > 14}>{d}</Draw></Cell>)}
          </ToolRow>
        </ToolBody>
      </ToolArea>

      <Main>
        <Left>
          <Tools>
            <Grip><Dots /></Grip>
            <ToolGrid>
              {tools.map(([n, d]) => <Cell key={n} aria-label={n}><Draw tri={!plainTools.includes(n)}>{d}</Draw></Cell>)}
            </ToolGrid>
          </Tools>
          <Osnaps>
            <PanelTitle $h={19}>Referencias a obj...<Draw s={12}><Gear /></Draw></PanelTitle>
            <OsnapTabs>
              <OsnapTab $on aria-label="Referencias"><Draw s={22}>{T.osnap}</Draw></OsnapTab>
              <OsnapTab aria-label="Filtro de selección">
                <Draw s={16}><path d="M14 18H64V26L46 44V76H34V44L14 26Z" fill="url(#grey)" strokeWidth="6" /><path d="M66 6H78V18M6 66V78H18" strokeWidth="5" /></Draw>
              </OsnapTab>
            </OsnapTabs>
            <Checks>
              {osnaps.map(o => <Check key={o}><Box type="checkbox" defaultChecked={osnapsOn.includes(o)} />{o}</Check>)}
            </Checks>
          </Osnaps>
        </Left>

        <Center>
          <Viewport>
            <Model />
            <ViewLabel>Perspectiva<ViewArrow><svg width="8" height="5"><path d="M0 0H8L4 5Z" fill="#26374f" /></svg></ViewArrow></ViewLabel>
            <Axes viewBox="0 0 50 60" fill="#5b5f65" aria-hidden="true">
              <path d="M4.500 15V42.500L31 48M4.500 42.500L17 30" fill="none" stroke="#5b5f65" />
              <text x="7" y="16">z</text><text x="20" y="29">y</text><text x="34" y="49">x</text>
            </Axes>
          </Viewport>
          <ViewTabs>
            <ViewTab $on>Perspectiva</ViewTab><ViewTab>Superior</ViewTab><ViewTab>Frontal</ViewTab><ViewTab>Derecha</ViewTab>
            <AddTab aria-label="Nueva vista"><svg width="10" height="10" fill="#fff" stroke="#77787c"><path d="M3.500.5H6.500V3.500H9.500V6.500H6.500V9.500H3.500V6.500H.5V3.500H3.500Z" /></svg></AddTab>
          </ViewTabs>
        </Center>

        <Right>
          <Layers>
            <PanelTitle $h={18}>Capas</PanelTitle>
            <LayerTools>
              {layerIcons.map(([n, d]) => <SmallCell key={n} aria-label={n}><Draw s={20}>{d}</Draw></SmallCell>)}
            </LayerTools>
            <Search>
              <svg width="11" height="12" fill="none" stroke="#4a4b4f"><circle cx="5" cy="5" r="4" /><path d="M8 8L11 12" /></svg>
              <SearchInput placeholder="Buscar" aria-label="Buscar" />
            </Search>
            <LayerList>
              <Table>
                <colgroup><col style={{ width: 80 }} /><col style={{ width: 20 }} /><col style={{ width: 20 }} /><col style={{ width: 20 }} /><col style={{ width: 20 }} /><col /></colgroup>
                <thead><tr><th>Capa</th><th /><th /><th /><th /><th>M</th></tr></thead>
                <tbody>
                  {layers.map(([n, c], i) => {
                    const current = n === '2.v2';
                    const on = n === '2';
                    return (
                      <Row key={i} $on={on} $bold={current}>
                        <td><Name>{n}</Name></td>
                        <td><Mid>{current && <svg width="14" height="10" fill="none" stroke="#222"><path d="M1 5L5 9L13 1" strokeWidth="1.500" /></svg>}</Mid></td>
                        <td><Mid>{!current && <LayerBulb on={i === 0} halo={on} />}</Mid></td>
                        <td><Mid>{!current && <OpenLock halo={on} />}</Mid></td>
                        <td><Mid><Swatch $c={c} aria-label={`Color ${n}`} /></Mid></td>
                        <td><Mid><Ring aria-label={`Material ${n}`} /></Mid></td>
                      </Row>
                    );
                  })}
                </tbody>
              </Table>
              <ScrollTrack><Thumb /></ScrollTrack>
            </LayerList>
          </Layers>
          <Side>
            <SideHead>
              <Draw s={14}><Gear /></Draw>
              <Draw s={20}><LayerStack /></Draw>
            </SideHead>
            <SideTabs>
              <Draw s={16}><g transform="translate(-10 -10) scale(1.250)"><Wheel /></g></Draw>
              <Draw s={16}><rect x="6" y="12" width="72" height="50" fill="url(#grey)" strokeWidth="7" /><path d="M42 62V74M26 75H58" strokeWidth="7" /></Draw>
              <Draw s={16}><rect x="4" y="6" width="76" height="72" fill="#cfd6ee" stroke="#7a86b0" strokeWidth="5" /><g transform="translate(0 2)"><Help /></g></Draw>
            </SideTabs>
          </Side>
        </Right>
      </Main>

      <Status>
        <Field $w={41} aria-label="Panel izquierdo"><svg width="14" height="14"><rect x="1" y="1" width="12" height="12" fill="#fff" stroke="#444548" strokeWidth="2" /><path d="M0 0H6V14H0Z" fill="#444548" /></svg></Field>
        <Field $w={84}>PlanoC</Field>
        <Field $w={82}>x 208.50</Field>
        <Field $w={103}>y 1132.72</Field>
        <Field $w={72}>z 0</Field>
        <Field $w={82}>Milímetros</Field>
        <Field $w={191}><svg width="16" height="16"><rect width="16" height="16" /></svg>2.v2</Field>
        <Toggles>
          {toggles.map(t => (
            <Toggle key={t} $on={togglesOn.includes(t)}>
              {t.startsWith('PlanoC auto') && <svg width="11" height="14" fill="none" stroke="#a5a6aa"><path d="M3.500 6V3Q5.500-.5 7.500 3V6" /><rect x="1.500" y="6.500" width="8" height="6" /></svg>}
              {t}
            </Toggle>
          ))}
        </Toggles>
        <Spacer />
        <WindowButton aria-label="Panel derecho"><svg width="14" height="14"><rect x="1" y="1" width="12" height="12" fill="#fff" stroke="#444548" strokeWidth="2" /><path d="M8 0H14V14H8Z" fill="#444548" /></svg></WindowButton>
      </Status>
    </App_>
  );
}
